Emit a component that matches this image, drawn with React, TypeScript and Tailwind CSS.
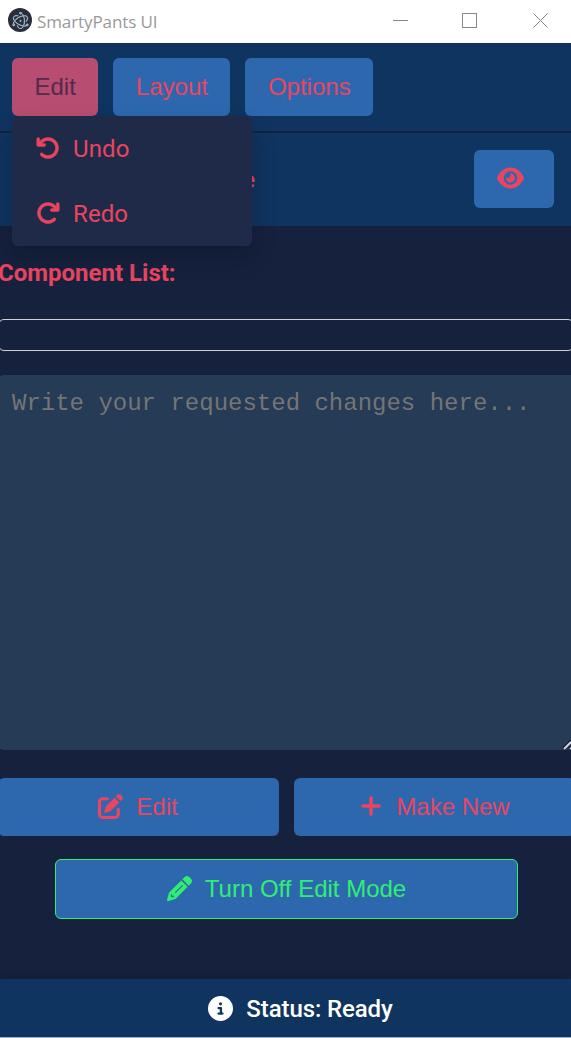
import type { ReactNode } from "react";
import {
  FaArrowRotateLeft,
  FaArrowRotateRight,
  FaCircleInfo,
  FaEye,
  FaPenToSquare,
  FaPlus,
} from "react-icons/fa6";
import { SiElectron } from "react-icons/si";

function PencilIcon() {
  return (
    <svg className="size-[25px] shrink-0" viewBox="0 0 512 512" fill="currentColor" fillRule="evenodd">
      <path d="M421.7 220.3L188.5 453.4C178.1 463.8 165.2 471.5 151.1 475.6L30.8 511C22.3 513.5 13.2 511.2 7 505C.8 498.8-1.5 489.7 1 481.2L36.4 360.9C40.5 346.8 48.2 333.9 58.6 323.5L291.7 90.3zM305 190L167 328a12 12 0 0 0 17 17L322 207a12 12 0 0 0-17-17zM86 368L74 410L102 438L142 426L150 406H116C106 406 100 398 100 390V362z" />
      <path d="M492.7 58.8C517.7 83.7 517.7 124.3 492.7 149.3L444.3 197.7L314.3 67.7L362.7 19.3C387.7-5.7 428.3-5.7 453.3 19.3z" />
    </svg>
  );
}

function TitleBar() {
  return (
    <header className="flex h-[43px] shrink-0 items-start bg-white pl-2 text-[#999999]">
      <span className="mt-2 flex size-6 items-center justify-center rounded-full bg-[#2b2e3a] text-[#a7d3df]">
        <SiElectron className="size-[17px]" stroke="currentColor" strokeWidth="0.7" />
      </span>
      <span className="mt-[10px] ml-[5px] font-['Open_Sans',sans-serif] text-[17px] leading-6 tracking-[-0.1px] whitespace-nowrap">
        SmartyPants UI
      </span>
      <svg className="mt-3 ml-auto h-4 w-[157px] shrink-0" viewBox="0 0 157 16" fill="none" stroke="#888">
        <path d="M0 8.5h15M69.5 1.5h14v14h-14z" shapeRendering="crispEdges" />
        <path d="M140.5 1.5l14 14M154.5 1.5l-14 14" />
      </svg>
      <span className="w-[21px] shrink-0" />
    </header>
  );
}

function MenuButton({ children, active }: { children: ReactNode; active?: boolean }) {
  return (
    <button
      className={
        active
          ? "h-[58px] rounded-md bg-[#b84d72] px-[22.5px] text-[#552a4d]"
          : "h-[58px] rounded-md bg-[#2d68ae] px-[22.5px] text-[#e94560]"
      }
    >
      {children}
    </button>
  );
}

function MenuItem({ icon, label }: { icon: ReactNode; label: string }) {
  return (
    <li className="flex h-[65px] items-center gap-[13px] pl-6 text-[#e94560]">
      <span className="-mt-0.5">{icon}</span>
      <span className="tracking-[0.1px]">{label}</span>
    </li>
  );
}

export default function App() {
  return (
    <div className="flex h-[1038px] w-[571px] flex-col overflow-hidden bg-[#16213e] font-[Roboto,sans-serif] text-2xl leading-9">
      <TitleBar />

      <nav className="relative z-10 flex h-[90px] shrink-0 gap-[15px] border-b-2 border-[#16213e] bg-[#0f3460] pt-[15px] pl-3 font-['Liberation_Sans',Arial,sans-serif]">
        <MenuButton active>Edit</MenuButton>
        <MenuButton>Layout</MenuButton>
        <MenuButton>Options</MenuButton>
        <ul className="absolute top-[73px] left-3 h-[130px] w-60 rounded-md bg-[#1f2a48] font-[Roboto,sans-serif] shadow-[0_12px_24px_rgba(0,0,0,0.2)]">
          <MenuItem icon={<FaArrowRotateLeft className="stroke-current" strokeWidth="10" />} label="Undo" />
          <MenuItem icon={<FaArrowRotateRight className="stroke-current" strokeWidth="10" />} label="Redo" />
        </ul>
      </nav>

      <section className="flex h-[93px] shrink-0 items-start justify-between bg-[#0f3460] pt-[17px] pr-[17px]">
        <h1 className="mt-3 w-[255px] text-right font-medium text-[#e94560]">Edit Mode</h1>
        <button className="flex h-[58px] w-20 rounded-md bg-[#2d68ae] pt-4 pl-[23px] text-[#e94560]">
          <FaEye className="h-6 w-[27px]" />
        </button>
      </section>

      <main className="-mx-0.5 flex grow flex-col">
        <h2 className="mt-[29px] font-bold text-[#e94560]">Component List:</h2>
        <div className="mt-7 -mr-px h-8 shrink-0 rounded-md border border-[#d0d0d0]" />
        <textarea
          className="mt-6 h-[375px] w-[582px] shrink-0 resize-none rounded-md bg-[#253b56] px-[14px] py-[11px] font-['Liberation_Mono','Courier_New',monospace] placeholder:text-[#757575] focus:outline-none"
          placeholder="Write your requested changes here..."
        />
        <div className="flex h-0 justify-end">
          <svg className="mt-[-12px] mr-0.5 h-3 w-[10px] shrink-0" viewBox="0 0 10 12">
            <path d="M2.5 11L10 3.5M8.5 11L10 9.5" fill="none" stroke="#111827" strokeWidth="3.6" />
            <path d="M3 11L10 4M9 11l1-1" fill="none" stroke="#d1d5db" strokeWidth="2" />
          </svg>
        </div>

        <div className="mt-7 flex h-[58px] shrink-0 gap-[15px] font-['Liberation_Sans',Arial,sans-serif] text-[#e94560]">
          <button className="flex w-[281px] shrink-0 items-center justify-center gap-[13px] rounded-md bg-[#2d68ae] pr-px pb-0.5">
            <FaPenToSquare className="size-[25px]" />
            <span className="mt-0.5">Edit</span>
          </button>
          <button className="flex w-[281px] shrink-0 items-center justify-center gap-[13px] rounded-md bg-[#2d68ae]">
            <FaPlus className="-mt-0.5 stroke-current" strokeWidth="10" />
            <span>Make New</span>
          </button>
        </div>

        <button className="mt-[23px] ml-[57px] flex h-[60px] w-[463px] shrink-0 items-center justify-center gap-[13px] rounded-md border border-[#30ee72] bg-[#2d68ae] font-['Liberation_Sans',Arial,sans-serif] text-[#30ee72]">
          <span className="-mt-0.5">
            <PencilIcon />
          </span>
          <span>Turn Off Edit Mode</span>
        </button>
      </main>

      <footer className="flex h-[59px] shrink-0 items-center justify-center gap-[13px] border-b border-[#a5aeba] bg-[#0f3460] pt-px pl-[30px] font-medium text-white shadow-[0_-2px_8px_rgba(0,0,0,0.1)]">
        <FaCircleInfo className="size-[25px]" />
        <span className="tracking-[-0.1px]">Status: Ready</span>
      </footer>
    </div>
  );
}
